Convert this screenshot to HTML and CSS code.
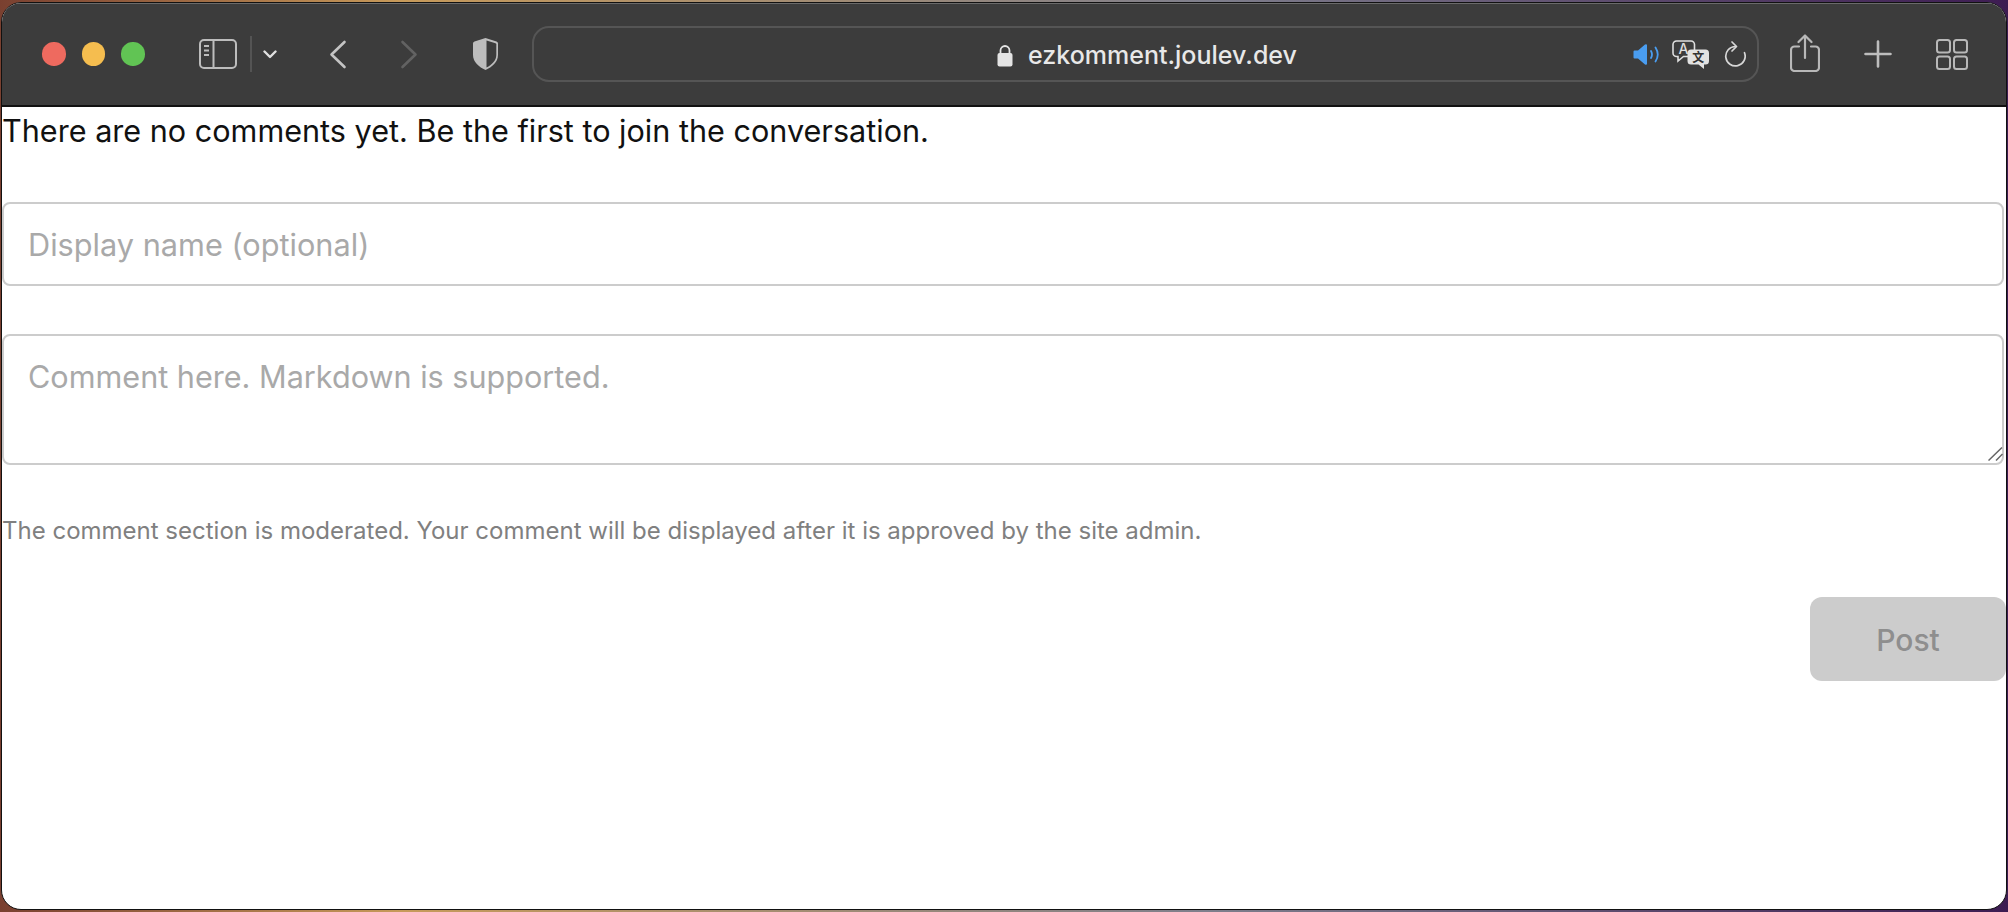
FILE: index.html
```html
<!DOCTYPE html>
<html lang="en">
<head>
<meta charset="utf-8">
<title>ezkomment.joulev.dev</title>
<link rel="stylesheet" href="styles.css">
</head>
<body>
<div class="window">
  <header class="toolbar">
    <div class="lights">
      <span class="light red"></span><span class="light yellow"></span><span class="light green"></span>
    </div>
    <svg class="ic sidebar" width="38" height="30" viewBox="0 0 38 30" fill="none" stroke="#bdbdbd" stroke-width="2"><rect x="1" y="1" width="36" height="28" rx="4"/><path d="M14.500 1v28"/><path d="M5 7h5M5 11.500h5M5 16h5" stroke-width="1.800"/></svg>
    <span class="divider"></span>
    <svg class="ic chevron" width="14" height="9" viewBox="0 0 14 9" fill="none" stroke="#e0e0e0" stroke-width="2.400" stroke-linecap="round" stroke-linejoin="round"><path d="M1.500 1.500 7 7l5.500-5.500"/></svg>
    <svg class="ic back" width="18" height="29" viewBox="0 0 18 29" fill="none" stroke="#c4c4c4" stroke-width="2.600" stroke-linecap="round" stroke-linejoin="round"><path d="M15.500 2 2.500 14.500 15.500 27"/></svg>
    <svg class="ic forward" width="18" height="29" viewBox="0 0 18 29" fill="none" stroke="#626262" stroke-width="2.600" stroke-linecap="round" stroke-linejoin="round"><path d="M2.500 2 15.500 14.500 2.500 27"/></svg>
    <svg class="ic shield" width="27" height="34" viewBox="0 0 27 34"><path d="M13.500 1 2.500 4.500Q1 5 1 6.500V18c0 7 6 12 12.500 15 6.500-3 12.500-8 12.500-15V6.500Q26 5 24.500 4.500Z" fill="#bdbdbd"/><path d="M14.500 3.500 23.500 6.300Q24.300 6.600 24.300 7.500V18c0 5.500-4.600 9.800-9.800 12.500Z" fill="#3c3c3c"/></svg>
    <div class="urlbar">
      <div class="address">
        <svg class="lock" width="16" height="23" viewBox="0 0 16 23"><path d="M3.500 10V6.500a4.500 4.500 0 0 1 9 0V10" fill="none" stroke="#e4e4e4" stroke-width="1.800"/><rect x="0.500" y="9" width="15" height="13.500" rx="2" fill="#e4e4e4"/></svg>
        <span class="host">ezkomment.joulev.dev</span>
      </div>
      <svg class="ic speaker" width="27" height="23" viewBox="0 0 27 23" fill="none"><path d="M0.500 8.500Q0.500 7.500 1.500 7.500H5L12 1.500Q14 0.500 14 2.500V20.500Q14 22.500 12 21.500L5 15.500H1.500Q0.500 15.500 0.500 14.500Z" fill="#4a9df0"/><path d="M18 8q2 3.500 0 7M22.500 4.500q4.500 7 0 14" stroke="#4a9df0" stroke-width="1.800" stroke-linecap="round"/></svg>
      <svg class="ic translate" width="38" height="29" viewBox="0 0 38 29"><path d="M4.500 1h14.500a3.500 3.500 0 0 1 3.500 3.500V13a3.500 3.500 0 0 1-3.500 3.500H11.500L6 21v-4.500H4.500A3.500 3.500 0 0 1 1 13V4.500A3.500 3.500 0 0 1 4.500 1Z" fill="#3c3c3c" stroke="#dedede" stroke-width="1.600"/><text class="glyph-a" x="11.500" y="14" text-anchor="middle">A</text><path d="M19 9.500h14.500a3.500 3.500 0 0 1 3.500 3.500v8a3.500 3.500 0 0 1-3.500 3.500H32v4.500l-5.500-4.500H19a3.500 3.500 0 0 1-3.500-3.500v-8A3.500 3.500 0 0 1 19 9.500Z" fill="#e2e2e2"/><text class="glyph-z" x="26.300" y="22" text-anchor="middle">文</text></svg>
      <svg class="ic reload" width="22" height="26" viewBox="0 0 22 26" fill="none" stroke="#d6d6d6" stroke-width="1.700" stroke-linecap="round" stroke-linejoin="round"><path d="M11.500 5.500a9.700 9.700 0 1 0 9 6.200"/><path d="M8 1l4.500 4.500L8 10"/></svg>
    </div>
    <svg class="ic share" width="30" height="38" viewBox="0 0 30 38" fill="none" stroke="#b8b8b8" stroke-width="2.200" stroke-linecap="round" stroke-linejoin="round"><path d="M9 12.500H4.500A3.500 3.500 0 0 0 1 16v17.500A3.500 3.500 0 0 0 4.500 37h21a3.500 3.500 0 0 0 3.500-3.500V16a3.500 3.500 0 0 0-3.500-3.500H21"/><path d="M15 24V1.500M8.500 8 15 1.500 21.500 8"/></svg>
    <svg class="ic plus" width="28" height="28" viewBox="0 0 28 28" fill="none" stroke="#bdbdbd" stroke-width="2.600" stroke-linecap="round"><path d="M14 1.500v25M1.500 14h25"/></svg>
    <svg class="ic tabs" width="32" height="31" viewBox="0 0 32 31" fill="none" stroke="#b8b8b8" stroke-width="2"><rect x="1" y="1" width="13" height="12.500" rx="2.500"/><rect x="18" y="1" width="13" height="12.500" rx="2.500"/><rect x="1" y="17.500" width="13" height="12.500" rx="2.500"/><rect x="18" y="17.500" width="13" height="12.500" rx="2.500"/></svg>
  </header>
  <main class="content">
    <p class="empty">There are no comments yet. Be the first to join the conversation.</p>
    <form class="form">
      <input class="field name" type="text" placeholder="Display name (optional)">
      <div class="comment-wrap">
        <textarea class="field comment" placeholder="Comment here. Markdown is supported."></textarea>
        <svg class="grip" width="15" height="14" viewBox="0 0 15 14" fill="none" stroke="#666" stroke-width="1.500"><path d="M0.500 13.500 14 0.500M8 13.500 14.500 7"/></svg>
      </div>
      <p class="note">The comment section is moderated. Your comment will be displayed after it is approved by the site admin.</p>
      <div class="actions"><button class="post" type="button" disabled>Post</button></div>
    </form>
  </main>
</div>
</body>
</html>
```
FILE: styles.css
```css
* { box-sizing: border-box; }
html, body { margin: 0; height: 100%; }
body {
  padding: 2px 1px 2px 1px;
  overflow: hidden;
  background: linear-gradient(90deg, #7a4030 0%, #c79a5a 20%, #7f7f8c 60%, #3d1c52 100%);
  font-family: Inter, "Liberation Sans", sans-serif;
}
.window {
  height: 908px;
  display: flex;
  flex-direction: column;
  border: 1px solid #111;
  border-radius: 20px;
  overflow: hidden;
  background: #fff;
}
.toolbar {
  flex: none;
  height: 104px;
  display: flex;
  align-items: center;
  background: #3c3c3c;
  border-bottom: 2px solid #111;
  box-shadow: inset 0 1px 0 #6a6a6a;
  padding-left: 40px;
}
.ic { flex: none; display: block; }
.lights { display: flex; gap: 16px; }
.light { width: 23.500px; height: 23.500px; border-radius: 50%; }
.red { background: #ee6a5f; }
.yellow { background: #f5bd4f; }
.green { background: #61c454; }
.sidebar { margin-left: 54px; }
.divider { width: 2px; height: 36px; margin-left: 13px; background: #545454; }
.chevron { margin-left: 11px; }
.back { margin-left: 52px; }
.forward { margin-left: 53px; }
.shield { margin-left: 54px; }
.urlbar {
  flex: none;
  width: 1227px;
  height: 56px;
  margin-left: 33px;
  padding-right: 11px;
  display: flex;
  align-items: center;
  border: 2px solid #555;
  border-radius: 17px;
}
.address {
  flex: 1;
  display: flex;
  align-items: center;
  justify-content: center;
  gap: 15px;
  padding-left: 128px;
  color: #e8e8e8;
}
.lock { margin-top: 2px; }
.host { margin-top: 2px; font-size: 25px; font-weight: 500; line-height: 28px; }
.translate { margin-left: 12px; }
.reload { margin-left: 14px; }
.glyph-a { font: 500 14px Inter, sans-serif; fill: #dedede; }
.glyph-z { font: 700 12px "Noto Sans CJK SC", sans-serif; fill: #333; }
.share { margin-left: 31px; margin-top: -3px; }
.plus { margin-left: 44px; }
.tabs { margin-left: 44px; }
.content { flex: 1; color: #111; }
.empty { margin: 2px 0 0; font-size: 30.600px; line-height: 44px; }
.form { display: flex; flex-direction: column; padding-right: 2px; }
.field {
  display: block;
  width: 100%;
  margin: 0;
  border: 2px solid #ccc;
  border-radius: 8px;
  background: #fff;
  font-family: inherit;
  color: #111;
  outline: none;
}
.field::placeholder { color: #a9a9a9; opacity: 1; }
.name { height: 84px; margin-top: 49px; padding: 0 24px; font-size: 30.700px; }
.comment-wrap { position: relative; margin-top: 48px; }
.comment { height: 131px; padding: 21px 24px; line-height: 40px; font-size: 30.600px; resize: none; }
.grip { position: absolute; right: 1px; bottom: 4px; }
.note { margin: 50px 0 0; font-size: 24px; line-height: 32px; color: #808080; }
.actions { display: flex; justify-content: flex-end; margin: 50px -2px 0 0; }
.post {
  width: 196px;
  height: 84px;
  border: 0;
  padding-top: 3px;
  border-radius: 12px;
  background: #ccc;
  color: #8e8e8e;
  font-family: inherit;
  font-size: 30px;
  font-weight: 500;
}
```
